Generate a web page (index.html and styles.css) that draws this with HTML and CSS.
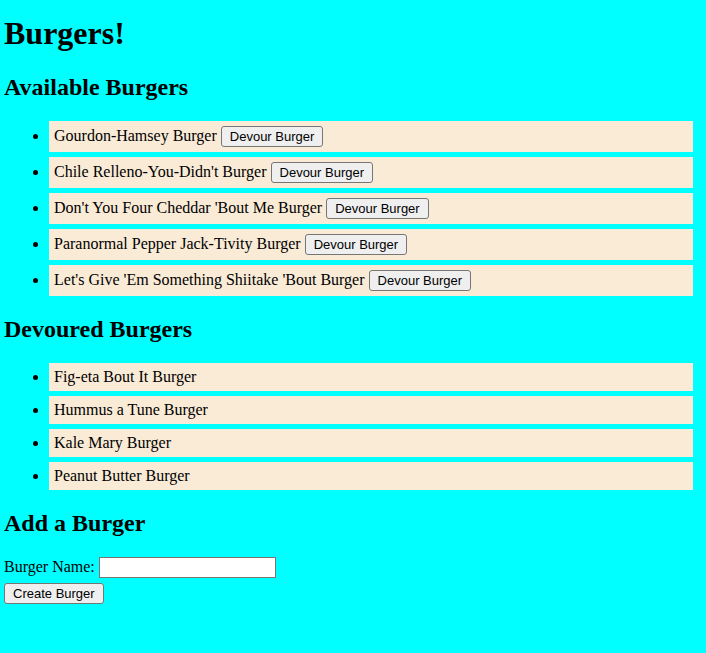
FILE: index.html
```html
<!DOCTYPE html>
<html lang="en">
<head>
<meta charset="utf-8">
<title>Burgers!</title>
<link rel="stylesheet" href="styles.css">
</head>
<body>
<h1>Burgers!</h1>
<h2>Available Burgers</h2>
<ul>
<li>Gourdon-Hamsey Burger <button type="button">Devour Burger</button></li>
<li>Chile Relleno-You-Didn't Burger <button type="button">Devour Burger</button></li>
<li>Don't You Four Cheddar 'Bout Me Burger <button type="button">Devour Burger</button></li>
<li>Paranormal Pepper Jack-Tivity Burger <button type="button">Devour Burger</button></li>
<li>Let's Give 'Em Something Shiitake 'Bout Burger <button type="button">Devour Burger</button></li>
</ul>
<h2>Devoured Burgers</h2>
<ul>
<li>Fig-eta Bout It Burger</li>
<li>Hummus a Tune Burger</li>
<li>Kale Mary Burger</li>
<li>Peanut Butter Burger</li>
</ul>
<h2>Add a Burger</h2>
<form>
<div class="field"><label for="burger-name">Burger Name:</label> <input type="text" id="burger-name"></div>
<button type="submit">Create Burger</button>
</form>
</body>
</html>
```
FILE: styles.css
```css
* {
  box-sizing: border-box;
}

body {
  margin: 0;
  padding: 15px 8px 0 4px;
  background: aqua;
  color: #000;
  font: 16px/18px "Liberation Serif", "Times New Roman", serif;
}

h1 {
  margin: 0 0 21px;
  font-size: 32px;
  line-height: 37px;
}

h2 {
  margin: 0 0 20px;
  font-size: 24px;
  line-height: 28px;
}

ul {
  margin: 0 5px 19px 45px;
  padding: 0;
}

li {
  margin-bottom: 5px;
  padding: 5px;
  background: antiquewhite;
}

button {
  height: 21px;
  padding: 0 8px;
  border: 1px solid #767676;
  border-radius: 3px;
  background: #efefef;
  color: #000;
  font: 13px/15px "Liberation Sans", Arial, sans-serif;
}

input {
  width: 177px;
  height: 21px;
  padding: 1px 2px;
  border: 1px solid #767676;
  background: #fff;
  font: 13px/15px "Liberation Sans", Arial, sans-serif;
}

.field {
  margin-bottom: 5px;
}
```
